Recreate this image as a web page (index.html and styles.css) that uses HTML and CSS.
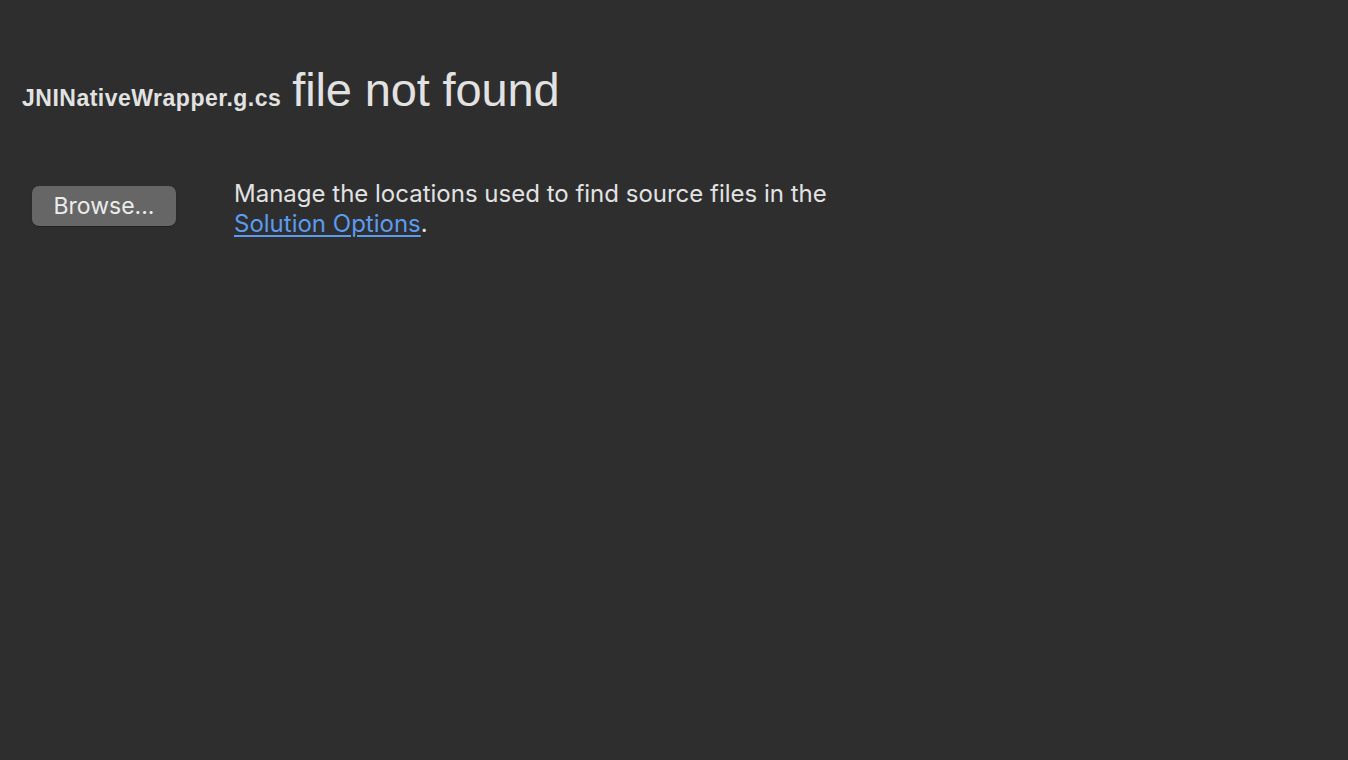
FILE: index.html
```html
<!DOCTYPE html>
<html>
<head>
<meta charset="utf-8">
<link rel="stylesheet" href="styles.css">
</head>
<body>
<div class="page">
  <h1 class="title"><span class="fname">JNINativeWrapper.g.cs</span> <span class="msg">file not found</span></h1>
  <div class="row">
    <button class="browse">Browse...</button>
    <p class="desc">Manage the locations used to find source files in the<br><a href="#" class="link">Solution Options</a>.</p>
  </div>
</div>
</body>
</html>
```

FILE: styles.css
```css
html, body {
  margin: 0;
  padding: 0;
  background: #2e2e2e;
  width: 1348px;
  height: 760px;
  overflow: hidden;
}
.page {
  padding: 60px 0 0 22px;
  color: #e2e2e2;
}
.title {
  margin: 0;
  font-weight: normal;
  display: flex;
  align-items: baseline;
  gap: 11px;
  line-height: 60px;
}
.fname {
  font-family: "Liberation Sans", Arial, sans-serif;
  font-weight: bold;
  font-size: 23px;
  letter-spacing: 0.5px;
}
.msg {
  font-family: "Liberation Sans", Arial, sans-serif;
  font-size: 47px;
  letter-spacing: -0.15px;
}
.row {
  display: flex;
  align-items: flex-start;
  margin-top: 51px;
  padding-left: 10px;
  gap: 58px;
}
.browse {
  width: 144px;
  height: 40px;
  margin-top: 7px;
  border: none;
  border-radius: 7px;
  background: #666666;
  color: #ececec;
  font-family: Inter, "Noto Sans", sans-serif;
  font-size: 23px;
  padding: 0;
  box-shadow: 0 1px 1px rgba(0,0,0,0.3);
}
.desc {
  margin: 0;
  font-family: Inter, "Noto Sans", sans-serif;
  font-size: 24px;
  line-height: 30px;
  color: #e2e2e2;
}
.link {
  color: #5b9bf0;
  text-decoration: underline;
  text-underline-offset: 3px;
}
```
